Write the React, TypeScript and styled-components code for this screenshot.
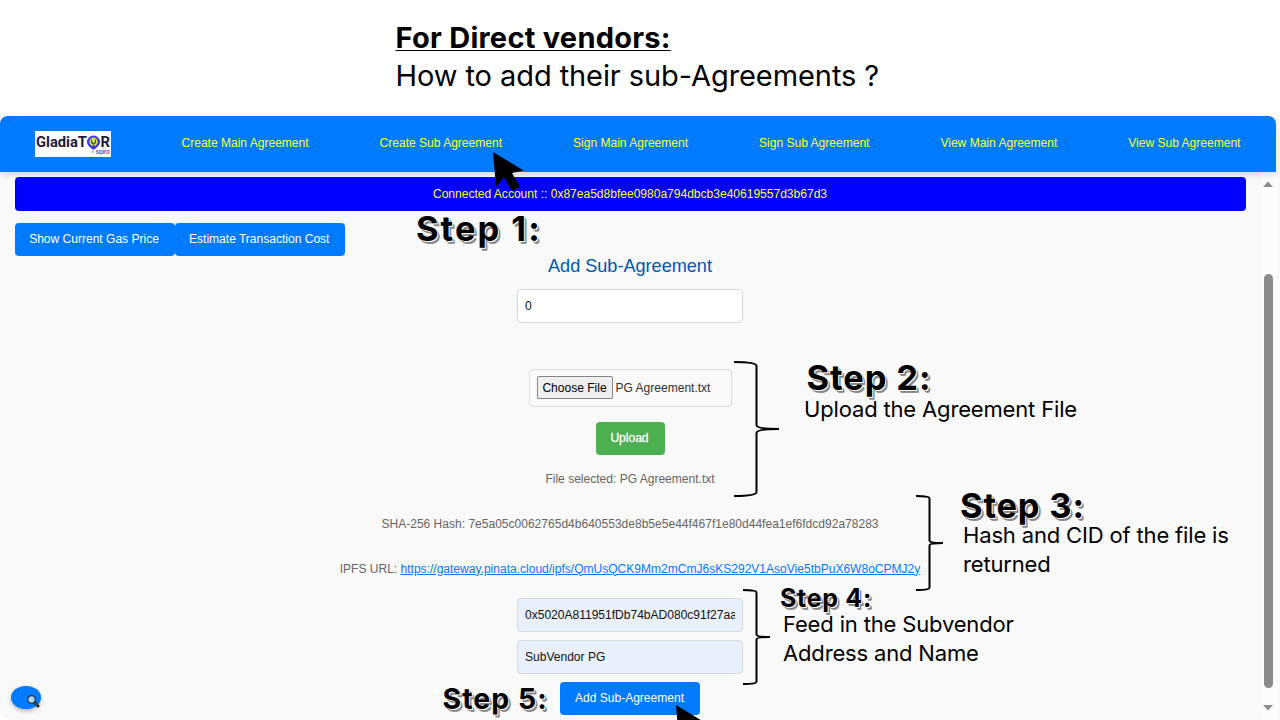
import React from "react";
import styled, { createGlobalStyle } from "styled-components";

const Global = createGlobalStyle`
  * { box-sizing: border-box; }
  html, body { margin: 0; padding: 0; background: #fff; }
  body { overflow: hidden; }
`;

const ui = `"Liberation Sans", Arial, sans-serif`;
const slide = `Inter, "Liberation Sans", sans-serif`;

const Slide = styled.div`
  position: relative;
  display: flex;
  flex-direction: column;
  width: 1280px;
  height: 720px;
  overflow: hidden;
  background: #fff;
  color: #000;
`;

const Title = styled.header`
  flex: none;
  height: 115px;
  padding: 19px 0 0 395.5px;
  font-family: ${slide};
  font-size: 29px;
  line-height: 37.5px;
  white-space: nowrap;
`;

const TitleStrong = styled.div`
  font-weight: 700;
  letter-spacing: 0.26px;

  span {
    text-decoration: underline;
    text-decoration-thickness: 1px;
    text-underline-offset: 2px;
    text-decoration-skip-ink: none;
  }
`;

const TitleLine = styled.div`
  letter-spacing: -0.08px;
`;

const Backdrop = styled.div`
  flex: 1;
  display: flex;
  min-height: 0;
  background: #f9f9f9;
  font-family: ${ui};
  font-size: 12.04px;
`;

const Window = styled.main`
  display: flex;
  flex-direction: column;
  width: 1277px;
  padding-top: 0.6px;
  border-right: 1px solid #fff;
  background: #fff;
`;

const Nav = styled.nav`
  position: relative;
  flex: none;
  display: flex;
  align-items: center;
  justify-content: space-between;
  height: 56px;
  padding: 0 35.5px 0 34.5px;
  border-radius: 8px 8px 0 0;
  background: #007bff;
  box-shadow: 0 3px 6px rgba(0, 0, 0, 0.14);
`;

const NavLink = styled.a`
  color: #ffff1c;
  line-height: 14px;
  padding-bottom: 2px;
`;

const Logo = styled.div`
  display: flex;
  width: 76px;
  height: 26px;
  background: #fff;
`;

const Body = styled.div`
  flex: 1;
  display: flex;
  min-height: 0;
`;

const Content = styled.section`
  flex: 1;
  padding: 5px 15px 0 14.5px;
  background: #f9f9f9;
  border-bottom-left-radius: 10px;
`;

const Banner = styled.div`
  display: flex;
  align-items: center;
  justify-content: center;
  height: 34px;
  border-radius: 4px;
  background: #0000ff;
  color: #ffff1c;
`;

const ButtonRow = styled.div`
  display: flex;
  margin-top: 12px;
`;

const Button = styled.button<{ $w: number; $top?: number; $green?: boolean }>`
  width: ${(p) => p.$w}px;
  height: 33px;
  margin-top: ${(p) => p.$top ?? 0}px;
  padding: 0 1px 1px 0;
  border: 0;
  border-radius: 4px;
  background: ${(p) => (p.$green ? "#4caf50" : "#007bff")};
  color: #fff;
  font: 12.04px ${ui};
  -webkit-text-stroke: ${(p) => (p.$green ? "0.3px #fff" : "0")};
`;

const Form = styled.div`
  display: flex;
  flex-direction: column;
  align-items: center;
`;

const Heading = styled.h2`
  margin: -1px 0 0;
  height: 22px;
  color: #0056b3;
  font-size: 18.1px;
  font-weight: 400;
  line-height: 22px;
`;

const Field = styled.input<{ $top: number; $filled?: boolean }>`
  width: 226px;
  height: 34.5px;
  margin-top: ${(p) => p.$top}px;
  padding: 0 7px;
  border: 1px solid #d9d9dc;
  border-radius: 4px;
  background: ${(p) => (p.$filled ? "#e8f0fe" : "#fff")};
  color: #111;
  font: 12.04px ${ui};
  outline: none;
`;

const FilePicker = styled.div`
  display: flex;
  align-items: center;
  gap: 3px;
  width: 203px;
  height: 38px;
  margin-top: 45.5px;
  padding-left: 7px;
  border: 1px solid #dedede;
  border-radius: 4px;
  color: #333;
`;

const Choose = styled.button`
  width: 76px;
  height: 23px;
  padding: 0;
  border: 1px solid #858585;
  border-radius: 2px;
  background: #efefef;
  color: #000;
  font: 12.04px ${ui};
`;

const Note = styled.p<{ $top: number }>`
  margin: ${(p) => p.$top}px 0 0;
  line-height: 14px;
  color: #666;
  white-space: nowrap;

  a { color: #007bff; text-decoration: underline; }
`;

const Scrollbar = styled.aside`
  display: flex;
  flex-direction: column;
  align-items: center;
  width: 15.5px;
  padding: 9.400px 0.5px 0 0;
  background: #fcfcfc;
`;

const Thumb = styled.div`
  width: 9px;
  height: 414px;
  margin: 87px 0 17px;
  border-radius: 5px;
  background: #8b8b8b;
`;

const SearchBubble = styled.div`
  position: absolute;
  left: 11px;
  top: 686px;
  width: 30px;
  height: 23px;
  border-radius: 50%;
  background: #007bff;
  box-shadow: 0 2px 4px rgba(0, 0, 0, 0.28);

  svg { position: absolute; left: 15px; top: 8px; }
`;

const Step = styled.div<{ $x: number; $y: number; $size: number; $ls: number }>`
  position: absolute;
  left: ${(p) => p.$x}px;
  top: ${(p) => p.$y}px;
  font: 700 ${(p) => p.$size}px/1 ${slide};
  letter-spacing: ${(p) => p.$ls}px;
  white-space: nowrap;
  text-shadow: 1px 1px 0 #fff, 2px 2px 0 #858585, 2.5px 2.5px 0 #909090;
`;

const Caption = styled.div<{ $x: number; $y: number }>`
  position: absolute;
  left: ${(p) => p.$x}px;
  top: ${(p) => p.$y}px;
  font: 22px/29px ${slide};
  letter-spacing: -0.16px;
  white-space: nowrap;
`;

const Overlay = styled.svg<{ $x: number; $y: number }>`
  position: absolute;
  left: ${(p) => p.$x}px;
  top: ${(p) => p.$y}px;
  overflow: visible;
`;

type BraceProps = { x: number; y: number; w: number; h: number; mid: number; r: number };

function Brace({ x, y, w, h, mid, r }: BraceProps) {
  const c = w / 2;
  const d = `M0 0 Q${c} 0 ${c} ${r} V${mid - r} Q${c} ${mid} ${w} ${mid} Q${c} ${mid} ${c} ${mid + r} V${h - r} Q${c} ${h} 0 ${h}`;
  return (
    <Overlay $x={x} $y={y} width={w} height={h}>
      <path d={d} fill="none" stroke="#000" strokeWidth="2" strokeLinejoin="bevel" />
    </Overlay>
  );
}

function Pointer({ x, y }: { x: number; y: number }) {
  return (
    <Overlay $x={x} $y={y} width="31" height="40">
      <path d="M0 0 L30.5 18.5 L19 21 L27 35 L19 39 L11 25 L3 35 Z" fill="#000" />
    </Overlay>
  );
}

function GladiatorLogo() {
  return (
    <Logo>
      <svg width="76" height="26" viewBox="0 0 76 26">
        <g fontFamily="Roboto, sans-serif" fontWeight="700" fill="#1c1b3a">
          <text x="1" y="16.300" fontSize="14.500" textLength="51" lengthAdjust="spacingAndGlyphs">GladiaT</text>
          <text x="65.5" y="16.300" fontSize="14.500" textLength="9.500" lengthAdjust="spacingAndGlyphs">R</text>
        </g>
        <path d="M58.500 4.500 a6.500 6.500 0 0 1 6.500 6.500 c0 3.500 -4 6 -6.500 8 c-2.500 -2 -6.500 -4.500 -6.500 -8 a6.500 6.500 0 0 1 6.500 -6.500z" fill="#3b36dc" />
        <circle cx="58.500" cy="10.800" r="4.200" fill="#d7e64b" />
        <path d="M56.500 8.500 v2 a2 2 0 0 0 4 0 v-2 M58.500 12.500 v2.500" fill="none" stroke="#3a4b73" strokeWidth="1.200" />
        <text x="56.500" y="22" fontSize="2.500" fill="#555" fontFamily="Inter, sans-serif">by</text>
        <text x="60.800" y="22.500" fontSize="5.500" fill="#4a42dd" fontWeight="600" fontFamily="Inter, sans-serif" textLength="14" lengthAdjust="spacingAndGlyphs">spiro</text>
      </svg>
    </Logo>
  );
}

const links = [
  "Create Main Agreement",
  "Create Sub Agreement",
  "Sign Main Agreement",
  "Sign Sub Agreement",
  "View Main Agreement",
  "View Sub Agreement",
];

export default function App() {
  return (
    <Slide>
      <Global />
      <Title>
        <TitleStrong><span>For Direct vendors:</span></TitleStrong>
        <TitleLine>How to add their sub-Agreements ?</TitleLine>
      </Title>
      <Backdrop>
        <Window>
          <Nav>
            <GladiatorLogo />
            {links.map((l) => <NavLink key={l}>{l}</NavLink>)}
          </Nav>
          <Body>
            <Content>
              <Banner>Connected Account :: 0x87ea5d8bfee0980a794dbcb3e40619557d3b67d3</Banner>
              <ButtonRow>
                <Button $w={160}>Show Current Gas Price</Button>
                <Button $w={170.5}>Estimate Transaction Cost</Button>
              </ButtonRow>
              <Form>
                <Heading>Add Sub-Agreement</Heading>
                <Field $top={12} defaultValue="0" />
                <FilePicker>
                  <Choose>Choose File</Choose>
                  <span>PG Agreement.txt</span>
                </FilePicker>
                <Button $w={69} $top={15} $green>Upload</Button>
                <Note $top={17}>File selected: PG Agreement.txt</Note>
                <Note $top={31}>SHA-256 Hash: 7e5a05c0062765d4b640553de8b5e5e44f467f1e80d44fea1ef6fdcd92a78283</Note>
                <Note $top={31}>
                  IPFS URL: <a>https://gateway.pinata.cloud/ipfs/QmUsQCK9Mm2mCmJ6sKS292V1AsoVie5tbPuX6W8oCPMJ2y</a>
                </Note>
                <Field $top={22} $filled defaultValue="0x5020A811951fDb74bAD080c91f27aa" />
                <Field $top={7.5} $filled defaultValue="SubVendor PG" />
                <Button $w={140} $top={8}>Add Sub-Agreement</Button>
              </Form>
            </Content>
            <Scrollbar>
              <svg width="10" height="6"><path d="M0 6 L5 0.500 L10 6Z" fill="#8b8b8b" /></svg>
              <Thumb />
              <svg width="10" height="6"><path d="M0 0 L5 5.500 L10 0Z" fill="#8b8b8b" /></svg>
            </Scrollbar>
          </Body>
        </Window>
      </Backdrop>

      <SearchBubble>
        <svg width="14" height="14" viewBox="0 0 14 14">
          <path d="M8 8 L12 12" stroke="#222" strokeWidth="3" strokeLinecap="round" />
          <path d="M9 9 L11.500 11.500" stroke="#777" strokeWidth="1" />
          <circle cx="5.500" cy="5.500" r="3.800" fill="#a9d8f5" stroke="#26323c" strokeWidth="1.300" />
        </svg>
      </SearchBubble>

      <Step $x={416} $y={212} $size={34.5} $ls={2}>Step 1:</Step>
      <Step $x={806.5} $y={361} $size={34.5} $ls={0.9}>Step 2:</Step>
      <Step $x={960} $y={489} $size={34.5} $ls={0.8}>Step 3:</Step>
      <Step $x={780} $y={586} $size={25} $ls={0.7}>Step 4:</Step>
      <Step $x={442.5} $y={685} $size={28.5} $ls={1}>Step 5:</Step>

      <Caption $x={804} $y={395}>Upload the Agreement File</Caption>
      <Caption $x={963} $y={521}>Hash and CID of the file is<br />returned</Caption>
      <Caption $x={783} $y={610}>Feed in the Subvendor<br />Address and Name</Caption>

      <Brace x={734} y={362} w={45} h={134} mid={67} r={4} />
      <Brace x={916} y={496} w={27} h={94} mid={47} r={2.5} />
      <Brace x={743} y={590} w={27} h={94} mid={47} r={2.5} />
      <Pointer x={493} y={152} />
      <Pointer x={676} y={705} />
    </Slide>
  );
}
